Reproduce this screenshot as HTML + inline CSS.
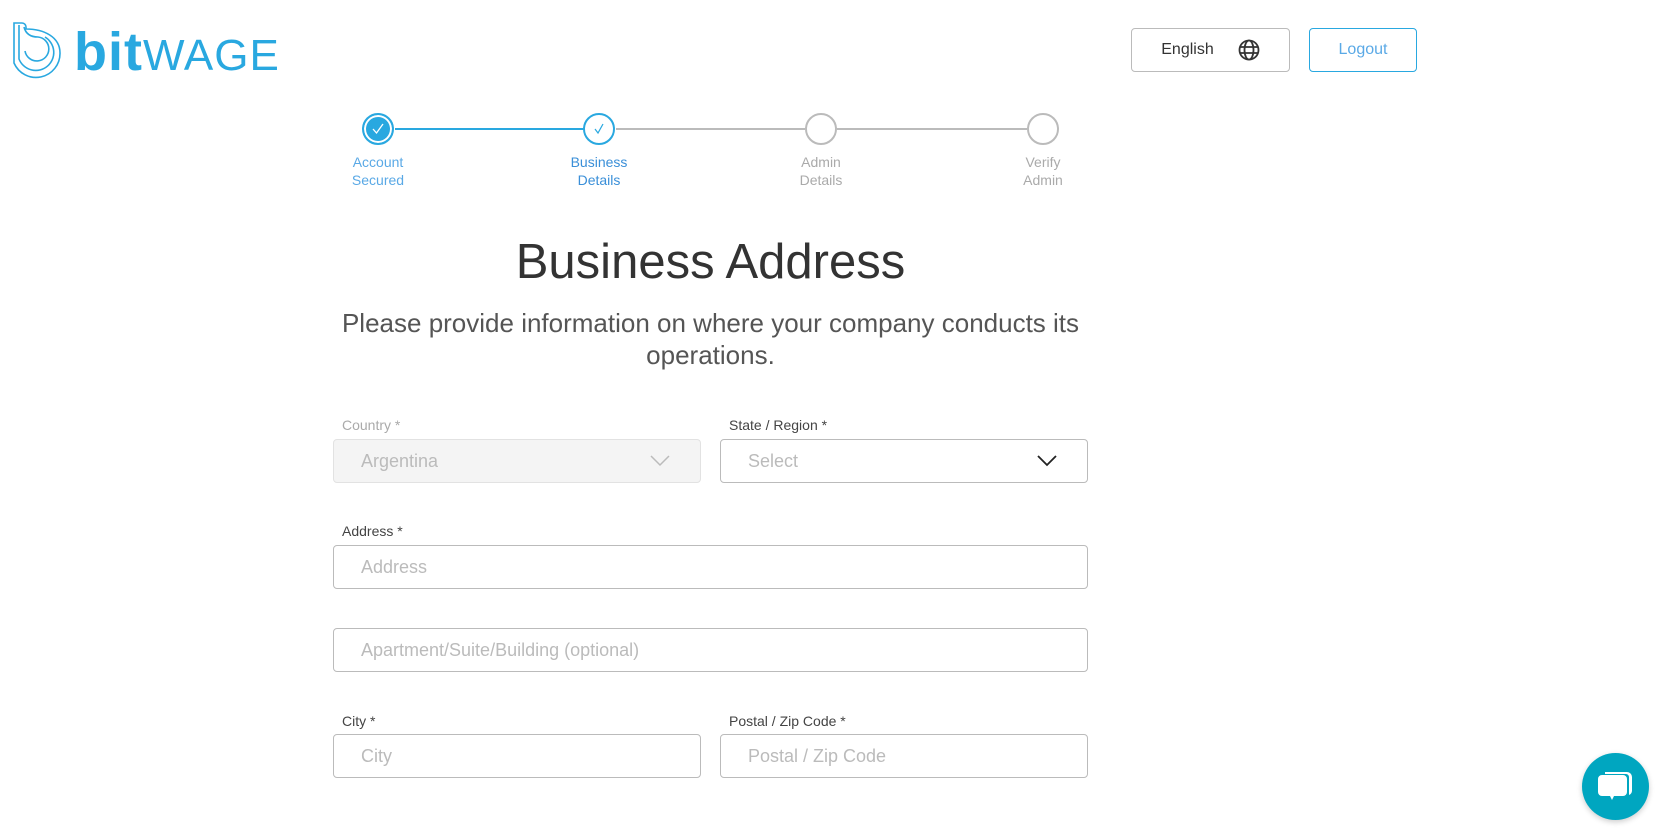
<!DOCTYPE html>
<html><head><meta charset="utf-8"><style>
*{box-sizing:border-box;margin:0;padding:0}
body{width:1660px;height:832px;background:#fff;font-family:"Liberation Sans",sans-serif;position:relative;overflow:hidden;color:#333}
.abs{position:absolute}
.btn{position:absolute;height:44px;border-radius:4px;display:flex;align-items:center;justify-content:center;font-size:16px}
.step{position:absolute;width:32px;height:32px;border-radius:50%;top:113px}
.lbl{position:absolute;top:153px;width:100px;text-align:center;font-size:14px;line-height:18px}
.line{position:absolute;top:128px;height:2px}
.fl{position:absolute;font-size:14px;color:#444}
.in{position:absolute;height:44px;border:1px solid #bbb;border-radius:4px;font-size:18px;color:#bbb;padding-left:27px;display:flex;align-items:center}
</style></head><body>
<svg class="abs" style="left:12px;top:21px" width="56" height="58" viewBox="0 0 56 58" fill="none" stroke="#29a8e0" stroke-width="1.6">
<path d="M2 2h8a4 4 0 0 1 4 4v2c18 0 34 8 34 24a24 24 0 0 1-46 10z"/>
<path d="M7 4v34a18 18 0 1 0 26-22"/>
<path d="M12 6c2 8 8 10 14 10a12 12 0 1 1-13 14"/>
</svg>
<div class="abs" style="left:74px;top:20px;font-size:54px;color:#29a8e0;letter-spacing:1px;line-height:64px"><b>bit</b><span style="font-weight:normal;font-size:44px">WAGE</span></div>
<div class="btn" style="left:1131px;top:28px;width:159px;border:1px solid #bbb;color:#333"><span style="margin-right:24px">English</span>
<svg width="22" height="22" viewBox="0 0 22 22" fill="none" stroke="#333" stroke-width="1.8"><circle cx="11" cy="11" r="9.5"/><ellipse cx="11" cy="11" rx="4.5" ry="9.5"/><path d="M2 8h18M2 14h18"/></svg></div>
<div class="btn" style="left:1309px;top:28px;width:108px;border:1px solid #29a8e0;color:#5aa9e6">Logout</div>
<div class="line" style="left:395px;width:189px;background:#29a8e0"></div>
<div class="line" style="left:616px;width:189px;background:#bbb"></div>
<div class="line" style="left:837px;width:190px;background:#bbb"></div>
<div class="step" style="left:362px;border:2px solid #29a8e0;background:#29a8e0;box-shadow:inset 0 0 0 2px #fff"></div>
<svg class="abs" style="left:370px;top:121px" width="16" height="16" viewBox="0 0 16 16" fill="none" stroke="#fff" stroke-width="1.3"><path d="M3 8l3.5 4L13 3"/></svg>
<div class="step" style="left:583px;border:2px solid #29a8e0"></div>
<svg class="abs" style="left:591px;top:121px" width="16" height="16" viewBox="0 0 16 16" fill="none" stroke="#29a8e0" stroke-width="1.2"><path d="M4 8l3 4L12 3"/></svg>
<div class="step" style="left:805px;border:2px solid #bbb"></div>
<div class="step" style="left:1027px;border:2px solid #bbb"></div>
<div class="lbl" style="left:328px;color:#5aa9e6">Account<br>Secured</div>
<div class="lbl" style="left:549px;color:#3a8fd8">Business<br>Details</div>
<div class="lbl" style="left:771px;color:#aaa">Admin<br>Details</div>
<div class="lbl" style="left:993px;color:#aaa">Verify<br>Admin</div>
<div class="abs" style="left:233px;width:955px;top:234px;text-align:center;font-size:49px;color:#333">Business Address</div>
<div class="abs" style="left:223px;width:975px;top:307px;text-align:center;font-size:26px;line-height:32px;color:#555">Please provide information on where your company conducts its<br>operations.</div>
<div class="fl" style="left:342px;top:417px;color:#aaa">Country *</div>
<div class="fl" style="left:729px;top:417px">State / Region *</div>
<div class="in" style="left:333px;top:439px;width:368px;background:#f4f4f4;border-color:#e2e2e2">Argentina
<svg class="abs" style="right:30px;top:15px" width="20" height="12" viewBox="0 0 20 12" fill="none" stroke="#bbb" stroke-width="1.5"><path d="M1 1l9 9 9-9"/></svg></div>
<div class="in" style="left:720px;top:439px;width:368px">Select
<svg class="abs" style="right:30px;top:15px" width="20" height="12" viewBox="0 0 20 12" fill="none" stroke="#222" stroke-width="1.8"><path d="M1 1l9 9 9-9"/></svg></div>
<div class="fl" style="left:342px;top:523px">Address *</div>
<div class="in" style="left:333px;top:545px;width:755px">Address</div>
<div class="in" style="left:333px;top:628px;width:755px">Apartment/Suite/Building (optional)</div>
<div class="fl" style="left:342px;top:713px">City *</div>
<div class="fl" style="left:729px;top:713px">Postal / Zip Code *</div>
<div class="in" style="left:333px;top:734px;width:368px">City</div>
<div class="in" style="left:720px;top:734px;width:368px">Postal / Zip Code</div>
<div class="abs" style="left:1582px;top:753px;width:67px;height:67px;border-radius:50%;background:#00a6c0;box-shadow:0 2px 6px rgba(0,0,0,.2)"></div>
<svg class="abs" style="left:1597px;top:768px" width="38" height="36" viewBox="0 0 38 36"><path d="M8 4h22a5 5 0 0 1 5 5v14a5 5 0 0 1-3 4V9a3 3 0 0 0-3-3H8z" fill="#fff"/><path d="M5 7h21a4 4 0 0 1 4 4v13a4 4 0 0 1-4 4H17l-2 4-2-4H5a4 4 0 0 1-4-4V11a4 4 0 0 1 4-4z" fill="#fff"/></svg>
</body></html>
